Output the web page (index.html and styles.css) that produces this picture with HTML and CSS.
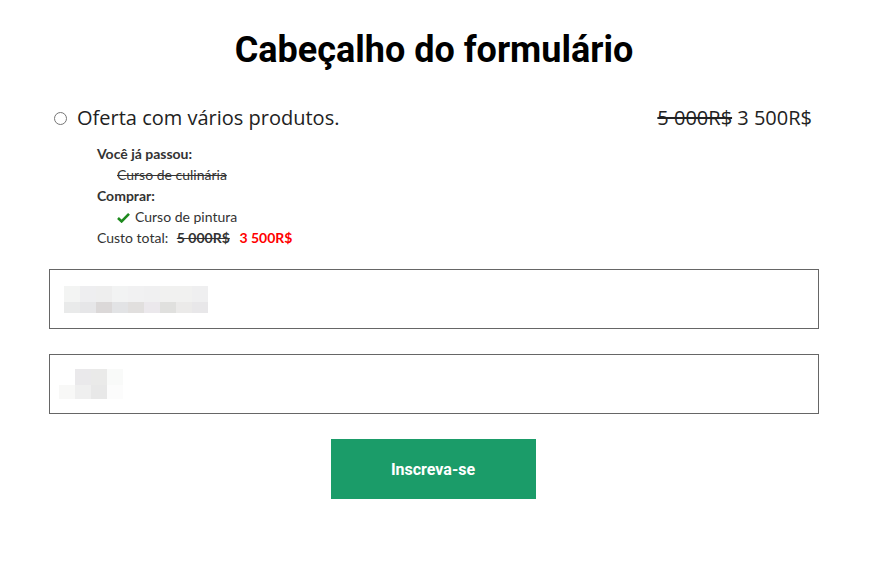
FILE: index.html
```html
<!DOCTYPE html>
<html lang="pt">
<head>
  <meta charset="UTF-8" />
  <meta name="viewport" content="width=device-width, initial-scale=1.0" />
  <title>Formulário</title>
  <link rel="stylesheet" href="styles.css">
</head>
<body>
  <div class="form">
    <h1>Cabeçalho do formulário</h1>

    <label class="offer">
      <input type="radio" name="offer" />
      <span class="offer-name">Oferta com vários produtos.</span>
      <span class="offer-price"><s>5 000R$</s> 3 500R$</span>
    </label>

    <div class="details">
      <div class="title">Você já passou:</div>
      <div class="item"><s>Curso de culinária</s></div>
      <div class="title">Comprar:</div>
      <div class="item">
        <svg class="check" width="13" height="11" viewBox="0 0 13 11"><path d="M1 6 L4.6 9.4 L12 1.8" fill="none" stroke="#1e8a1e" stroke-width="2.6"/></svg>
        Curso de pintura
      </div>
      <div class="total">Custo total: <s>5 000R$</s> <span class="new">3 500R$</span></div>
    </div>

    <div class="field">
      <div class="blur blur-a">
        <i style="background:#f3f4f3"></i><i style="background:#eeeef0"></i><i style="background:#eeeeee"></i><i style="background:#f2f3f3"></i><i style="background:#f1f1f2"></i><i style="background:#f0f0f1"></i><i style="background:#f1f1f0"></i><i style="background:#f1f1f0"></i><i style="background:#efeff0"></i>
        <i style="background:#e9eaea"></i><i style="background:#e6e6e8"></i><i style="background:#dbd8d8"></i><i style="background:#e2e3e5"></i><i style="background:#e1dfde"></i><i style="background:#ebe8ec"></i><i style="background:#e0e0de"></i><i style="background:#ebeae9"></i><i style="background:#e8e7e9"></i>
      </div>
    </div>
    <div class="field">
      <div class="blur blur-b">
        <i style="background:#fff"></i><i style="background:#eae9eb"></i><i style="background:#eaeae9"></i><i style="background:#f9faf9"></i>
        <i style="background:#f8f8f7"></i><i style="background:#efefef"></i><i style="background:#e8e8e8"></i><i style="background:#fcfcfc"></i>
      </div>
    </div>

    <div class="actions">
      <button>Inscreva-se</button>
    </div>
  </div>
</body>
</html>
```
FILE: styles.css
```css
body {
  margin: 0;
  background: #fff;
  color: #000;
  font-family: "Open Sans", sans-serif;
}
.form {
  width: 770px;
  margin: 0 49px;
  padding-top: 28px;
}
h1 {
  margin: 0 0 33px;
  font-family: Roboto, sans-serif;
  font-weight: 700;
  font-size: 36px;
  line-height: 44px;
  text-align: center;
}
.offer {
  display: flex;
  align-items: center;
  padding: 0 7px 0 5px;
  font-size: 20px;
  line-height: 26px;
  color: #222;
}
.offer input {
  width: 13px;
  height: 13px;
  margin: 0 10px 0 0;
}
.offer-name {
  flex: 1;
}
.details {
  margin: 12px 0 0 48px;
  font-family: Lato, sans-serif;
  font-size: 14px;
  line-height: 21px;
  color: #333;
}
.details .title {
  font-weight: 700;
}
.details .item {
  padding-left: 20px;
  display: flex;
  align-items: center;
  gap: 5px;
}
.check {
  margin-top: 1px;
}
.total s {
  font-weight: 700;
  margin-left: 5px;
}
.total .new {
  color: #f00;
  font-weight: 700;
  margin-left: 6px;
}
.field {
  height: 58px;
  border: 1px solid #666;
  margin-top: 21px;
  display: flex;
  align-items: center;
}
.field + .field {
  margin-top: 25px;
}
.blur {
  display: grid;
}
.blur i {
  display: block;
}
.blur-a {
  margin-left: 14px;
  grid-template-columns: repeat(9, 16px);
  grid-template-rows: 16px 11px;
}
.blur-b {
  margin-left: 9px;
  grid-template-columns: repeat(4, 16px);
  grid-template-rows: 16px 14px;
}
.actions {
  display: flex;
  justify-content: center;
  margin-top: 25px;
  padding-right: 2px;
}
button {
  width: 205px;
  height: 60px;
  border: none;
  background: #1b9c69;
  color: #fff;
  font-family: Roboto, sans-serif;
  font-weight: 700;
  font-size: 16px;
  cursor: pointer;
}
```
